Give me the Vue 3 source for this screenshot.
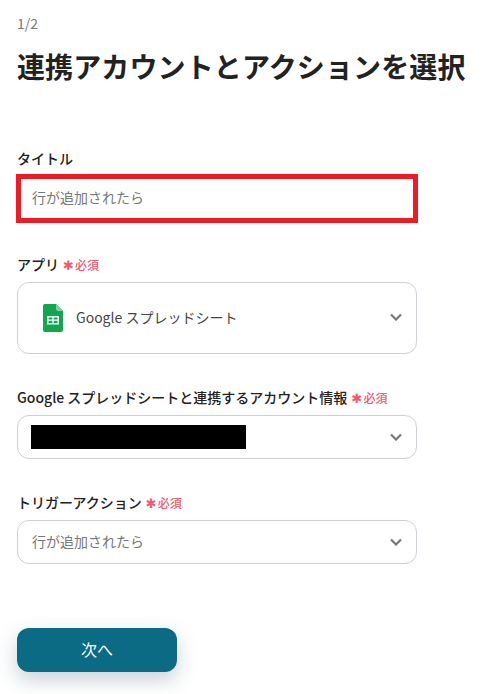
<script setup>
const chevron = 'M1 1.5 L6 6.5 L11 1.5'
</script>

<template>
  <main class="page">
    <p class="step">1/2</p>
    <h1 class="title">連携アカウントとアクションを選択</h1>

    <section class="field title-field">
      <div class="label">タイトル</div>
      <div class="highlight"><span class="nudge">行が追加されたら</span></div>
    </section>

    <section class="field app-field">
      <div class="label">アプリ<span class="req"><span class="star">✱</span>必須</span></div>
      <div class="select tall">
        <svg class="sheet" viewBox="0 0 20 28" width="20" height="28">
          <path d="M2 0 H13 L20 7 V26 a2 2 0 0 1 -2 2 H2 a2 2 0 0 1 -2 -2 V2 a2 2 0 0 1 2 -2 Z" fill="#0ea94f" />
          <path d="M13 0 L20 7 H15 a2 2 0 0 1 -2 -2 Z" fill="#7fd0a0" />
          <path d="M4 12 H16 V20.5 H4 Z M5.5 13.5 V15.4 H9.3 V13.5 Z M10.7 13.5 V15.4 H14.5 V13.5 Z M5.5 16.8 V19 H9.3 V16.8 Z M10.7 16.8 V19 H14.5 V16.8 Z" fill="#fff" fill-rule="evenodd" />
        </svg>
        <span class="app-name nudge">Google スプレッドシート</span>
        <svg class="chev" viewBox="0 0 12 8" width="12" height="8"><path :d="chevron" /></svg>
      </div>
    </section>

    <section class="field account-field">
      <div class="label">Google スプレッドシートと連携するアカウント情報<span class="req"><span class="star">✱</span>必須</span></div>
      <div class="select">
        <span class="redacted"></span>
        <svg class="chev" viewBox="0 0 12 8" width="12" height="8"><path :d="chevron" /></svg>
      </div>
    </section>

    <section class="field action-field">
      <div class="label">トリガーアクション<span class="req"><span class="star">✱</span>必須</span></div>
      <div class="select">
        <span class="value nudge">行が追加されたら</span>
        <svg class="chev" viewBox="0 0 12 8" width="12" height="8"><path :d="chevron" /></svg>
      </div>
    </section>

    <button class="next" type="button"><span class="nudge">次へ</span></button>
  </main>
</template>

<style>
html, body { background: #fff; }
</style>

<style scoped>
.page {
  box-sizing: border-box;
  width: 484px;
  height: 694px;
  padding: 15px 0 0 17px;
  overflow: hidden;
  font-family: "Noto Sans CJK JP", "Noto Sans", sans-serif;
  color: #222;
  background: #fff;
}
.step {
  margin: 0;
  font-size: 14px;
  line-height: 17px;
  color: #777;
}
.title {
  margin: 13px 0 0;
  font-size: 28px;
  line-height: 42px;
  font-weight: 700;
  letter-spacing: 0.12px;
  white-space: nowrap;
  color: #222;
}
.field { width: 400px; }
.title-field { margin-top: 61px; }
.app-field { margin-top: 31px; }
.account-field { margin-top: 33px; }
.action-field { margin-top: 33px; }
.label {
  display: flex;
  align-items: center;
  height: 20px;
  font-size: 14px;
  font-weight: 500;
  white-space: nowrap;
  color: #222;
}
.req {
  display: inline-flex;
  align-items: center;
  margin-left: 4px;
  font-size: 12px;
  font-weight: 500;
  color: #f9566c;
}
.star {
  width: 12px;
  font-size: 13px;
  line-height: 12px;
  padding-top: 3px;
  font-family: "DejaVu Sans", sans-serif;
  font-weight: 400;
}
.highlight {
  box-sizing: border-box;
  width: 402px;
  height: 49px;
  margin: 6px 0 0 -1px;
  padding-left: 11px;
  display: flex;
  align-items: center;
  border: 5px solid #ed1c24;
  font-size: 14px;
  color: #777;
}
.nudge {
  display: block;
  margin-bottom: 2px;
}
.highlight .nudge { margin-bottom: 4px; }
.select {
  box-sizing: border-box;
  position: relative;
  display: flex;
  align-items: center;
  width: 400px;
  height: 44px;
  margin-top: 8px;
  padding: 0 14px;
  border: 1px solid #cdd0d8;
  border-radius: 12px;
  background: #fff;
  font-size: 14px;
}
.tall { height: 72px; padding-left: 25px; }
.tall .chev { margin-top: -5px; }
.sheet { flex: none; }
.app-name { margin-left: 13px; margin-bottom: 3px; color: #444; }
.value { color: #777; }
.redacted {
  display: block;
  width: 215px;
  height: 24px;
  margin-left: -1px;
  background: #000;
}
.chev {
  position: absolute;
  right: 14px;
  top: 50%;
  margin-top: -4px;
  fill: none;
  stroke: #777;
  stroke-width: 2.2;
}
.next {
  display: block;
  width: 160px;
  height: 44px;
  margin-top: 64px;
  border: 0;
  border-radius: 12px;
  background: #0b6a84;
  color: #fff;
  font-family: inherit;
  font-size: 16px;
  box-shadow: 0 8px 20px rgba(40, 70, 90, 0.25);
}
</style>
